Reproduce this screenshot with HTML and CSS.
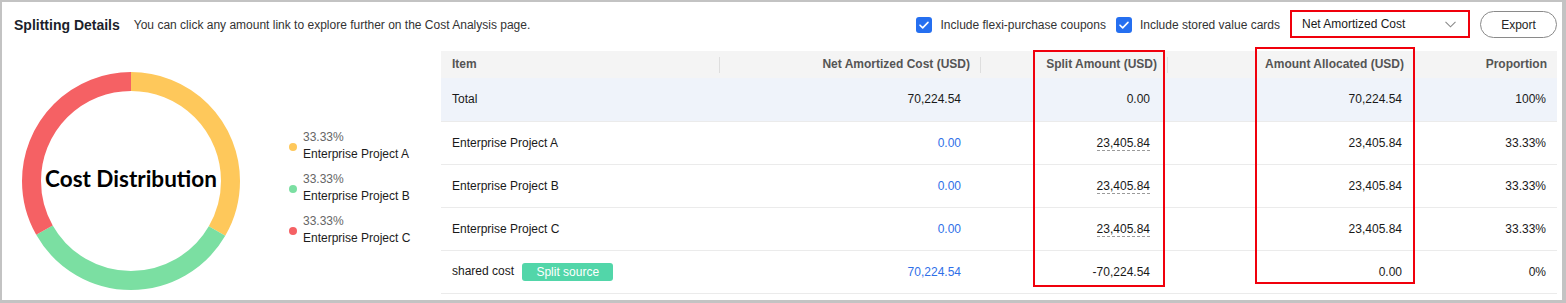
FILE: index.html
```html
<!DOCTYPE html>
<html lang="en">
<head>
  <meta charset="UTF-8" />
  <meta name="viewport" content="width=device-width, initial-scale=1.0"/>
  <title>Splitting Details</title>
  <link rel="stylesheet" href="styles.css">
</head>
<body>
  <div class="panel">
    <div class="top">
      <span class="title">Splitting Details</span>
      <span class="hint">You can click any amount link to explore further on the Cost Analysis page.</span>

      <div class="controls">
        <label class="check">
          <span class="box">
            <svg width="16" height="16" viewBox="0 0 16 16"><path d="M4 8.2l2.7 2.7L12 5.4" fill="none" stroke="#fff" stroke-width="1.6" stroke-linecap="round" stroke-linejoin="round"/></svg>
          </span>
          Include flexi-purchase coupons
        </label>
        <label class="check">
          <span class="box">
            <svg width="16" height="16" viewBox="0 0 16 16"><path d="M4 8.2l2.7 2.7L12 5.4" fill="none" stroke="#fff" stroke-width="1.6" stroke-linecap="round" stroke-linejoin="round"/></svg>
          </span>
          Include stored value cards
        </label>
        <div class="select">
          <span>Net Amortized Cost</span>
          <svg width="11" height="7" viewBox="0 0 11 7"><path d="M0.5 0.8l5 5 5-5" fill="none" stroke="#8a8a8a" stroke-width="1.1"/></svg>
        </div>
        <button class="btn">Export</button>
      </div>
    </div>

    <div class="content">
      <div class="chart">
        <svg class="donut" width="218" height="218" viewBox="0 0 218 218">
          <g transform="rotate(-90 109 109)" fill="none" stroke-width="19">
            <circle cx="109" cy="109" r="99.5" stroke="#fec85b" stroke-dasharray="208.39 625.18" stroke-dashoffset="0"/>
            <circle cx="109" cy="109" r="99.5" stroke="#7bdfa2" stroke-dasharray="208.39 625.18" stroke-dashoffset="-208.39"/>
            <circle cx="109" cy="109" r="99.5" stroke="#f56164" stroke-dasharray="208.39 625.18" stroke-dashoffset="-416.79"/>
          </g>
          <text class="donut-label" x="109" y="115" text-anchor="middle">Cost Distribution</text>
        </svg>

        <ul class="legend">
          <li><span class="dot yellow"></span><div><div class="pct">33.33%</div><div class="name">Enterprise Project A</div></div></li>
          <li><span class="dot green"></span><div><div class="pct">33.33%</div><div class="name">Enterprise Project B</div></div></li>
          <li><span class="dot red"></span><div><div class="pct">33.33%</div><div class="name">Enterprise Project C</div></div></li>
        </ul>
      </div>

      <div class="table-wrap">
        <table class="split-table">
          <colgroup>
            <col style="width:279px">
            <col style="width:261px">
            <col style="width:187px">
            <col style="width:247px">
            <col style="width:142px">
          </colgroup>
          <thead>
            <tr>
              <th class="sep">Item</th>
              <th class="num c-net sep">Net Amortized Cost (USD)</th>
              <th class="num c-split sep">Split Amount (USD)</th>
              <th class="num c-alloc">Amount Allocated (USD)</th>
              <th class="num c-prop">Proportion</th>
            </tr>
          </thead>
          <tbody>
            <tr class="total">
              <td>Total</td>
              <td class="num c-net">70,224.54</td>
              <td class="num c-split">0.00</td>
              <td class="num c-alloc">70,224.54</td>
              <td class="num c-prop">100%</td>
            </tr>
            <tr>
              <td>Enterprise Project A</td>
              <td class="num c-net"><span class="link">0.00</span></td>
              <td class="num c-split"><span class="dashed">23,405.84</span></td>
              <td class="num c-alloc">23,405.84</td>
              <td class="num c-prop">33.33%</td>
            </tr>
            <tr>
              <td>Enterprise Project B</td>
              <td class="num c-net"><span class="link">0.00</span></td>
              <td class="num c-split"><span class="dashed">23,405.84</span></td>
              <td class="num c-alloc">23,405.84</td>
              <td class="num c-prop">33.33%</td>
            </tr>
            <tr>
              <td>Enterprise Project C</td>
              <td class="num c-net"><span class="link">0.00</span></td>
              <td class="num c-split"><span class="dashed">23,405.84</span></td>
              <td class="num c-alloc">23,405.84</td>
              <td class="num c-prop">33.33%</td>
            </tr>
            <tr>
              <td>shared cost <span class="tag">Split source</span></td>
              <td class="num c-net"><span class="link">70,224.54</span></td>
              <td class="num c-split">-70,224.54</td>
              <td class="num c-alloc">0.00</td>
              <td class="num c-prop">0%</td>
            </tr>
          </tbody>
        </table>

        <div class="mark mark-split"></div>
        <div class="mark mark-alloc"></div>
      </div>
    </div>
  </div>
</body>
</html>
```

FILE: styles.css
```css
* {
  box-sizing: border-box;
}

body {
  margin: 0;
  font-family: "Liberation Sans", Arial, sans-serif;
  font-size: 12px;
  color: #191919;
  background: #fff;
}

.panel {
  width: 1566px;
  height: 303px;
  border-style: solid;
  border-color: #c3c3c3;
  border-width: 2px 4px 3px 2px;
  background: #fff;
  overflow: hidden;
}

/* header bar */
.top {
  display: flex;
  align-items: center;
  height: 45px;
  padding: 0 5px 0 12px;
}

.title {
  font-size: 14px;
  font-weight: bold;
  color: #1c1f2b;
}

.hint {
  margin-left: 14px;
  color: #333;
}

.controls {
  margin-left: auto;
  display: flex;
  align-items: center;
}

.check {
  display: flex;
  align-items: center;
  color: #333;
  margin-right: 10px;
}

.box {
  width: 16px;
  height: 16px;
  border-radius: 3px;
  background: #256ff0;
  margin-right: 8px;
  display: flex;
}

.select {
  width: 180px;
  height: 28px;
  margin-top: -1px;
  border: 2px solid #f0000c;
  display: flex;
  align-items: center;
  justify-content: space-between;
  padding: 0 12px 0 10px;
  color: #191919;
}

.btn {
  margin-left: 10px;
  width: 77px;
  height: 27px;
  border: 1px solid #8a8a8a;
  border-radius: 14px;
  background: #fff;
  font-family: inherit;
  font-size: 12px;
  color: #252525;
  padding: 0;
}

/* body */
.content {
  display: flex;
  margin-top: 4px;
  padding-right: 5px;
}

.chart {
  width: 439px;
  display: flex;
  align-items: flex-start;
  padding: 21px 0 0 20px;
}

.donut-label {
  font-family: Lato, "Liberation Sans", sans-serif;
  font-weight: bold;
  font-size: 22.5px;
  fill: #000;
}

.legend {
  list-style: none;
  margin: 57px 0 0 49px;
  padding: 0;
}

.legend li {
  display: flex;
  align-items: center;
  margin-bottom: 8px;
  line-height: 17px;
}

.dot {
  width: 8px;
  height: 8px;
  border-radius: 50%;
  margin: 2px 6px 0 0;
}

.dot.yellow { background: #fec85b; }
.dot.green { background: #7bdfa2; }
.dot.red { background: #f56164; }

.pct {
  color: #666;
}

.name {
  color: #1c1c1c;
}

/* table */
.table-wrap {
  position: relative;
  width: 1116px;
}

.split-table {
  width: 1116px;
  table-layout: fixed;
  border-collapse: collapse;
}

.split-table th {
  height: 27px;
  padding: 0 11px 1px;
  background: #f4f4f4;
  color: #555;
  font-weight: bold;
  text-align: left;
  position: relative;
}

.split-table th.sep::after {
  content: "";
  position: absolute;
  right: 0;
  top: 6px;
  width: 1px;
  height: 16px;
  background: #dedede;
}

.split-table td {
  height: 43px;
  padding: 0 11px;
  border-bottom: 1px solid #ebebeb;
  white-space: nowrap;
}

.split-table .num {
  text-align: right;
}

.split-table th.c-prop { padding-right: 10px; }
.split-table td.c-net { padding-right: 20px; }
.split-table td.c-split { padding-right: 18px; }
.split-table td.c-alloc { padding-right: 13px; }
.split-table td.c-prop { padding-right: 11px; }

.split-table tr.total td {
  background: #eff3fa;
}

.link {
  color: #2f6fe8;
}

.dashed {
  border-bottom: 1px dashed #9a9a9a;
}

.tag {
  display: inline-block;
  margin-left: 5px;
  height: 18px;
  line-height: 18px;
  padding: 0 14px;
  border-radius: 3px;
  background: #52d6a9;
  color: #fff;
  vertical-align: middle;
}

/* red highlight frames drawn over the columns */
.mark {
  position: absolute;
  border: 2px solid #f0000c;
  pointer-events: none;
}

.mark-split {
  left: 592px;
  top: -1px;
  width: 132px;
  height: 237px;
}

.mark-alloc {
  left: 814px;
  top: -4px;
  width: 160px;
  height: 237px;
}
```
